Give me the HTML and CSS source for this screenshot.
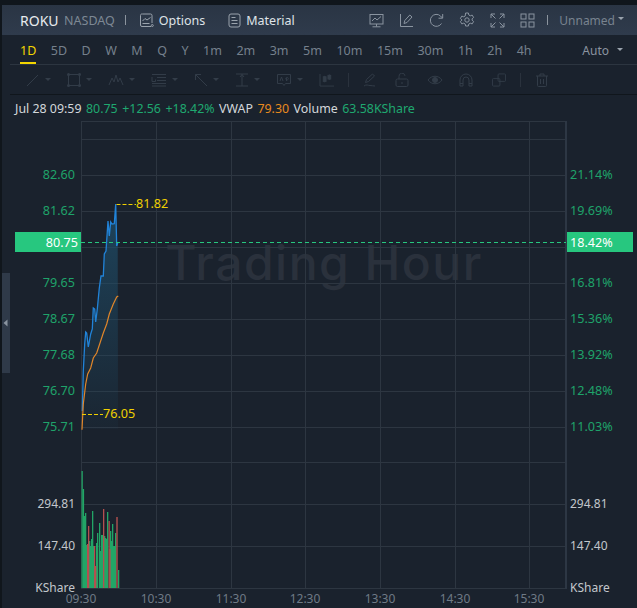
FILE: index.html
```html
<!DOCTYPE html>
<html lang="en">
<head>
<meta charset="utf-8">
<title>ROKU chart</title>
<link rel="stylesheet" href="styles.css">
</head>
<body>
<div class="app">
  <header class="head">
    <span class="sym">ROKU</span>
    <span class="exch">NASDAQ</span>
    <span class="sep sep-a"></span>
    <svg class="ico opt-ico" viewBox="0 0 14 15"><path d="M3 1h8a1.500 1.500 0 0 1 1.500 1.500V10M11.500 13.500H2.500A1.500 1.500 0 0 1 1 12V2.500A1.500 1.500 0 0 1 3 1"/><path d="M3 8l2.500-2.500 2 1.500L11 4.500"/><path d="M3 10.500h7"/><circle cx="12.800" cy="12.500" r="1"/></svg>
    <span class="link">Options</span>
    <svg class="ico mat-ico" viewBox="0 0 13 15"><rect x="1" y="1" width="11" height="13" rx="2"/><path d="M3.500 4.500h4M3.500 7.500h6M3.500 10.500h6"/></svg>
    <span class="link">Material</span>
    <span class="spacer"></span>
    <svg class="ico tool" viewBox="0 0 15 15"><rect x="1" y="1.500" width="13" height="9.500"/><path d="M3 8l3-3 2 2 4-3.500M7.500 11v2.500M3.500 13.800h8"/></svg>
    <svg class="ico tool" viewBox="0 0 15 15"><path d="M1.500 1v12.500h12.500"/><path d="M5 10.500l.8-3 5-5.500 2.200 2-5 5.500z"/></svg>
    <svg class="ico tool" viewBox="0 0 15 15"><path d="M12.500 10.500A6 6 0 1 1 11.500 3L13.500 5"/><path d="M13.700 1v4.200H9.500"/></svg>
    <svg class="ico tool gear" viewBox="0 0 16 16"><path d="M6.600 1h2.800l.4 2 1.500.8 1.900-.7 1.400 2.400-1.500 1.300v1.400l1.500 1.300-1.400 2.400-1.900-.7-1.500.8-.4 2H6.600l-.4-2-1.500-.8-1.900.7-1.400-2.400 1.500-1.300V7.800L1.400 6.500l1.400-2.400 1.900.7 1.500-.8z"/><circle cx="8" cy="8" r="2.200"/></svg>
    <svg class="ico tool" viewBox="0 0 15 15"><path d="M1 5V1h4M10 1h4v4M14 10v4h-4M5 14H1v-4M1 1l4.500 4.500M14 1L9.500 5.500M14 14L9.500 9.500M1 14l4.500-4.500"/></svg>
    <svg class="ico tool" viewBox="0 0 15 15"><rect x="1" y="1" width="5" height="5"/><rect x="9" y="1" width="5" height="5"/><rect x="1" y="9" width="5" height="5"/><rect x="9" y="9" width="5" height="5"/></svg>
    <span class="sep sep-b"></span>
    <span class="named">Unnamed</span>
    <span class="caret caret-head"></span>
  </header>

  <nav class="periods">
    <span class="tab active">1D</span>
    <span class="tab">5D</span>
    <span class="tab">D</span>
    <span class="tab">W</span>
    <span class="tab">M</span>
    <span class="tab">Q</span>
    <span class="tab">Y</span>
    <span class="tab">1m</span>
    <span class="tab">2m</span>
    <span class="tab">3m</span>
    <span class="tab">5m</span>
    <span class="tab">10m</span>
    <span class="tab">15m</span>
    <span class="tab">30m</span>
    <span class="tab">1h</span>
    <span class="tab">2h</span>
    <span class="tab">4h</span>
    <span class="spacer"></span>
    <span class="auto">Auto</span>
    <span class="caret caret-auto"></span>
  </nav>

  <div class="tools">
    <svg class="ico draw" viewBox="0 0 14 14"><path d="M1 13L12 2"/></svg><span class="caret caret-tool"></span>
    <svg class="ico draw" viewBox="0 0 14 14"><rect x="1.500" y="1.500" width="11" height="11"/><path class="dots" d="M1.500 1.500h.01M12.500 1.500h.01M1.500 12.500h.01M12.500 12.500h.01"/></svg><span class="caret caret-tool"></span>
    <svg class="ico draw wide" viewBox="0 0 16 14"><path d="M1 12L4 5l2 4 2-7 2 7 2-4 3 7"/></svg><span class="caret caret-tool"></span>
    <svg class="ico draw wide" viewBox="0 0 16 14"><path d="M1 1.500h14M6 4.500h9M6 7.500h9M1 10.500h14M1 13h14M1 4v4.500h3.500V6.500"/></svg><span class="caret caret-tool"></span>
    <svg class="ico draw" viewBox="0 0 14 14"><path d="M1.500 7V1.500H7M1.500 1.500L13 13"/></svg><span class="caret caret-tool"></span>
    <svg class="ico draw" viewBox="0 0 14 14"><path d="M1 1h12M1 13h12M7 1v12M5 4l2-2.500L9 4"/></svg><span class="caret caret-tool"></span>
    <svg class="ico draw wide" viewBox="0 0 16 14"><path d="M1.500 1.500h13v9h-5L8 12.500l-1.500-2h-5z"/><path d="M4 8l1.500-4L7 8M10.500 5v3M12 6.500a1.300 1.300 0 1 0-.1.100"/></svg><span class="caret caret-tool"></span>
    <svg class="ico draw wide" viewBox="0 0 17 15"><path d="M1 1v13h15M6 3v7M11 1.500v6"/><rect x="4.500" y="4" width="3" height="5" class="solid"/><rect x="9.500" y="2.500" width="3" height="4" class="solid"/></svg>
    <span class="div"></span>
    <svg class="ico draw" viewBox="0 0 14 14"><path d="M2.500 9.500l1-3L9.500 1l2 2-6 5.500zM1 13c2.500-2 4-.5 6-.5s3 .5 5 .5"/></svg>
    <svg class="ico draw" viewBox="0 0 14 14"><rect x="1" y="6" width="12" height="7.500" rx="1.500"/><path d="M4 6V3.500a3 3 0 0 1 6-.6M7 9v2"/></svg>
    <svg class="ico draw wide tight" viewBox="0 0 16 14"><path d="M1 7c3.500-5 10.500-5 14 0-3.500 5-10.500 5-14 0z"/><circle class="solid" cx="8" cy="7" r="2.500"/></svg>
    <svg class="ico draw" viewBox="0 0 14 14"><path d="M1 13V7a6 6 0 0 1 12 0v6h-3V7a3 3 0 0 0-6 0v6zM1 10.500h3M10 10.500h3"/></svg>
    <svg class="ico draw wide" viewBox="0 0 16 15"><rect x="1" y="6" width="8" height="8" rx="1"/><rect x="7" y="1" width="8" height="8" rx="1"/></svg>
    <span class="div"></span>
    <svg class="ico draw" viewBox="0 0 14 14"><path d="M1 3h12M5 3V1h4v2M2.500 3v9.500a1 1 0 0 0 1 1h7a1 1 0 0 0 1-1V3M5.500 6v5M8.500 6v5"/></svg>
  </div>

  <div class="quote">
    <span>Jul 28 09:59</span>
    <span class="up">80.75</span>
    <span class="up">+12.56</span>
    <span class="up">+18.42%</span>
    <span>VWAP</span>
    <span class="vwap">79.30</span>
    <span>Volume</span>
    <span class="up">63.58KShare</span>
  </div>

  <svg class="chart" viewBox="0 120 637 488" width="637" height="488">
    <defs>
      <linearGradient id="area" x1="0" y1="0" x2="0" y2="1">
        <stop offset="0" stop-color="#1f4f6b" stop-opacity=".75"/>
        <stop offset="1" stop-color="#1f4f6b" stop-opacity=".08"/>
      </linearGradient>
    </defs>

    <text class="mark" x="324" y="279" text-anchor="middle">Trading Hour</text>

    <path class="grid" d="M81 120.500H566M81 138.500H566M81 174.500H566M81 210.500H566M81 246.500H566M81 282.500H566M81 318.500H566M81 354.500H566M81 390.500H566M81 426.500H566M81 461.500H566M81 503.500H566M81 545.500H566M81 587.500H566"/>
    <path class="grid" d="M81.500 120V588M156.500 120V588M231.500 120V588M305.500 120V588M380.500 120V588M455.500 120V588M529.500 120V588"/>
    <path class="axis" d="M566 120V588"/>

    <path fill="url(#area)" d="M82.300 410L83.300 370 84.700 343 85.700 331 86.700 332 88.300 346 90.700 333 92.300 328 93.300 307 94.700 308 95.700 321 97.300 308 99.300 287 101 275 103.300 275 104.300 253 106 250 108 220 109.300 235 110.700 221 112 223 114.300 222.700 115.700 203 116.700 245 117.700 242 118 428H82.300z"/>
    <polyline class="price" points="82.300,410 83.300,370 84.700,343 85.700,331 86.700,332 88.300,346 90.700,333 92.300,328 93.300,307 94.700,308 95.700,321 97.300,308 99.300,287 101,275 103.300,275 104.300,253 106,250 108,220 109.300,235 110.700,221 112,223 114.300,222.700 115.700,203 116.700,245 117.700,242"/>
    <polyline class="avg" points="82,428.700 83.300,403 85.700,383 87.700,373 90.700,367 93.300,357 96.700,352 100,342 103.300,332 106.700,323 109.300,313 113.300,303 116.700,296 118.300,295"/>

    <path class="hi" d="M116.500 203.500H136M82 413.500H103"/>
    <text class="yellow" x="136" y="206.500">81.82</text>
    <text class="yellow" x="103" y="417">76.05</text>

    <path class="last" d="M81 241.500H566"/>
    <rect class="flag" x="15" y="231" width="66" height="20"/>
    <rect class="flag" x="567" y="231" width="66" height="20"/>
    <text class="flag-t" x="78" y="245.500" text-anchor="end">80.75</text>
    <text class="flag-t" x="570" y="245.500">18.42%</text>

    <g class="lab-up">
      <text x="75" y="178" text-anchor="end">82.60</text>
      <text x="75" y="214" text-anchor="end">81.62</text>
      <text x="75" y="286" text-anchor="end">79.65</text>
      <text x="75" y="322" text-anchor="end">78.67</text>
      <text x="75" y="358" text-anchor="end">77.68</text>
      <text x="75" y="394" text-anchor="end">76.70</text>
      <text x="75" y="430" text-anchor="end">75.71</text>
      <text x="570" y="178">21.14%</text>
      <text x="570" y="214">19.69%</text>
      <text x="570" y="286">16.81%</text>
      <text x="570" y="322">15.36%</text>
      <text x="570" y="358">13.92%</text>
      <text x="570" y="394">12.48%</text>
      <text x="570" y="430">11.03%</text>
    </g>

    <g class="bars-g">
      <rect x="81.500" y="470" width="1.300" height="117"/><rect x="82.800" y="488" width="1.300" height="99"/><rect x="84" y="515" width="1.300" height="72"/><rect x="85" y="512" width="1.300" height="75"/><rect x="86" y="544" width="1.300" height="43"/><rect x="89" y="540" width="1.300" height="47"/><rect x="90" y="545" width="1.300" height="42"/><rect x="91" y="538" width="1.300" height="49"/><rect x="92" y="510" width="1.300" height="77"/><rect x="93" y="545" width="1.300" height="42"/><rect x="96" y="542" width="1.300" height="45"/><rect x="97" y="532" width="1.300" height="55"/><rect x="99" y="522" width="1.300" height="65"/><rect x="100" y="550" width="1.300" height="37"/><rect x="101" y="534" width="1.300" height="53"/><rect x="102" y="534" width="1.300" height="53"/><rect x="104" y="535" width="1.300" height="52"/><rect x="105" y="537" width="1.300" height="50"/><rect x="106" y="538" width="1.300" height="49"/><rect x="107" y="511" width="1.300" height="76"/><rect x="110" y="530" width="1.300" height="57"/><rect x="111" y="540" width="1.300" height="47"/><rect x="112" y="523" width="1.300" height="64"/><rect x="113" y="545" width="1.300" height="42"/><rect x="114" y="545" width="1.300" height="42"/><rect x="115" y="532" width="1.300" height="55"/><rect x="118" y="569" width="1.300" height="18"/>
    </g>
    <g class="bars-r">
      <rect x="87" y="543" width="1.300" height="44"/><rect x="88" y="525" width="1.300" height="62"/><rect x="94" y="545" width="1.300" height="42"/><rect x="95" y="565" width="1.300" height="22"/><rect x="103" y="508" width="1.300" height="79"/><rect x="108.500" y="520" width="1.300" height="67"/><rect x="109.300" y="548" width="1.300" height="39"/><rect x="116.300" y="516" width="1.400" height="71"/>
    </g>

    <g class="lab-vol">
      <text x="75" y="507" text-anchor="end">294.81</text>
      <text x="75" y="549" text-anchor="end">147.40</text>
      <text x="75" y="591" text-anchor="end">KShare</text>
      <text x="570" y="507">294.81</text>
      <text x="570" y="549">147.40</text>
      <text x="570" y="591">KShare</text>
    </g>

    <g class="lab-time">
      <text x="81" y="602">09:30</text>
      <text x="156" y="602">10:30</text>
      <text x="231" y="602">11:30</text>
      <text x="305" y="602">12:30</text>
      <text x="380" y="602">13:30</text>
      <text x="455" y="602">14:30</text>
      <text x="529" y="602">15:30</text>
    </g>

    <rect class="handle" x="2" y="272" width="8" height="100"/>
    <path class="handle-arrow" d="M7.500 318.500v7l-4-3.500z"/>
  </svg>
</div>
</body>
</html>
```

FILE: styles.css
```css
html, body {
  margin: 0;
  padding: 0;
  background: #10161c;
  overflow: hidden;
}
.app {
  width: 635px;
  height: 603px;
  margin: 5px 0 0 2px;
  background: #1a222d;
  font-family: "Noto Sans", "Open Sans", sans-serif;
  font-size: 12px;
  display: flex;
  flex-direction: column;
}
.spacer { flex: 1; }
.ico {
  fill: none;
  stroke: currentColor;
  stroke-width: 1;
  flex: none;
}
.head {
  height: 30px;
  flex: none;
  display: flex;
  align-items: center;
  padding: 0 13px 0 18px;
  background: linear-gradient(#2a3544, #2f3b4c);
  color: #e6e9ed;
  box-sizing: border-box;
}
.sym { font-size: 14px; color: #e8ebee; }
.exch { font-size: 12.500px; color: #7d8894; margin-left: 5.500px; }
.sep { width: 1px; height: 10px; background: #8b949e; }
.sep-a { margin-left: 10px; }
.opt-ico { width: 15px; height: 15px; margin-left: 13px; color: #9aa3ad; }
.link { font-size: 12.500px; margin-left: 5px; color: #dfe3e7; }
.mat-ico { width: 13px; height: 15px; margin-left: 23px; color: #9aa3ad; }
.tool { width: 15px; height: 15px; margin-left: 15px; color: #8a94a0; }
.gear { width: 16px; height: 16px; }
.sep-b { margin-left: 12px; }
.named { font-size: 12px; color: #78838f; margin-left: 11px; }
.caret {
  width: 0;
  height: 0;
  border: 3px solid transparent;
  border-top: 3px solid #9aa3ad;
  border-bottom: 0;
}
.caret-head { margin-left: 3px; margin-top: -3px; }
.periods {
  height: 30px;
  flex: none;
  box-sizing: border-box;
  margin-left: 8px;
  padding: 0 14px 0 10px;
  display: flex;
  align-items: center;
  gap: 14.500px;
  border-bottom: 1px solid #2c3540;
  color: #75808c;
  font-size: 12.500px;
}
.tab {
  height: 29px;
  line-height: 31px;
  box-sizing: border-box;
}
.tab.active { color: #f2d500; border-bottom: 2px solid #f2d500; }
.auto { font-size: 12px; color: #8a94a0; padding-top: 2px; }
.caret-auto { margin-left: -6.500px; }
.tools {
  height: 30px;
  flex: none;
  box-sizing: border-box;
  margin-left: 8px;
  padding-left: 16px;
  display: flex;
  align-items: center;
  border-bottom: 1px solid #10161c;
  color: #323c48;
}
.draw { width: 14px; height: 14px; margin-right: 18px; }
.wide { width: 16px; }
.tight { margin-right: 16px; }
.solid { fill: currentColor; }
.dots { stroke-width: 3; stroke-linecap: round; }
.caret-tool {
  border-top-color: #333d49;
  margin-left: -13px;
  margin-right: 16px;
}
.div { width: 1px; height: 14px; background: #2a323d; margin-right: 14px; margin-left: -5px; }
.quote {
  height: 26px;
  flex: none;
  display: flex;
  align-items: center;
  padding-left: 13px;
  gap: 4.500px;
  color: #d3d7db;
  font-size: 12.400px;
}
.up { color: #1fa870; }
.vwap { color: #e88a1e; }
.chart {
  display: block;
  margin-left: -2px;
  flex: none;
  font-family: "Noto Sans", "Open Sans", sans-serif;
  font-size: 12px;
}
.mark {
  font-family: Inter, sans-serif;
  font-size: 48px;
  font-weight: 500;
  fill: #2a313c;
  letter-spacing: 1.500px;
}
.grid { stroke: #2d3641; stroke-width: 1; fill: none; }
.axis { stroke: #2d3744; stroke-width: 2; fill: none; }
.price { fill: none; stroke: #2183d8; stroke-width: 1.300; }
.avg { fill: none; stroke: #e0862a; stroke-width: 1.200; }
.hi { stroke: #f0d000; stroke-width: 1; stroke-dasharray: 4 2; fill: none; }
.yellow { fill: #f0d000; font-size: 12.600px; }
.last { stroke: #27c77f; stroke-width: 1; stroke-dasharray: 4 3; fill: none; }
.flag { fill: #27c77f; }
.flag-t { fill: #fff; font-size: 12.600px; }
.lab-up { fill: #1fa36a; font-size: 12.600px; }
.lab-vol { fill: #c3c7cc; font-size: 12px; }
.lab-time { fill: #6f7a86; font-size: 12px; text-anchor: middle; }
.bars-g { fill: #22a566; }
.bars-r { fill: #b4504f; }
.handle { fill: #2f3a49; }
.handle-arrow { fill: #8a94a0; }
```
